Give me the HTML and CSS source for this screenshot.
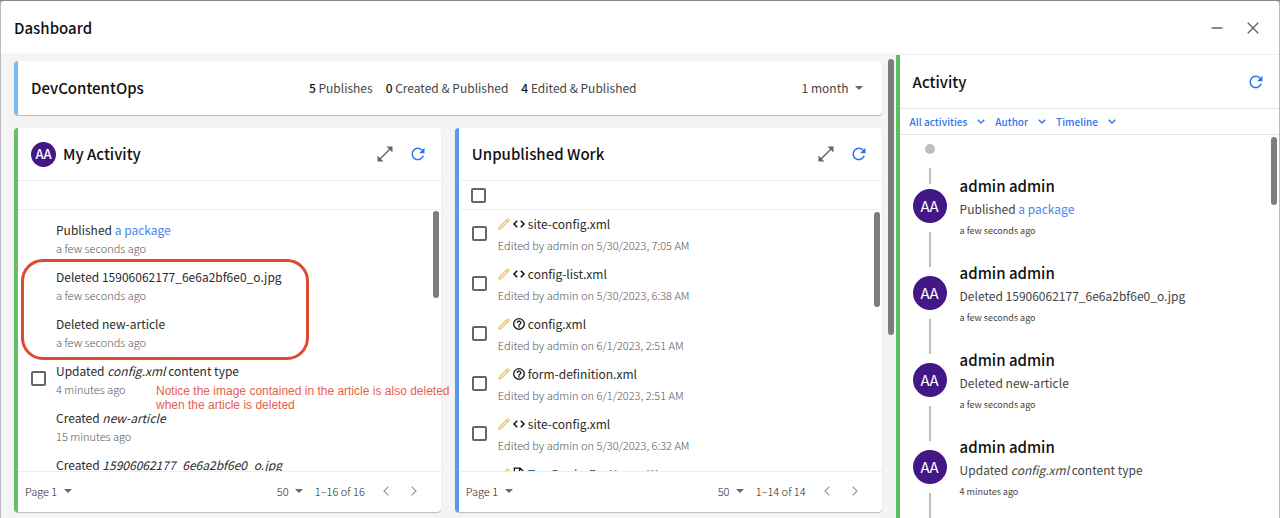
FILE: index.html
```html
<!DOCTYPE html>
<html lang="en">
<head>
<meta charset="utf-8">
<title>Dashboard</title>
<meta name="viewport" content="width=device-width, initial-scale=1">
<link rel="stylesheet" href="styles.css">
</head>
<body>
<svg class="sprite" aria-hidden="true">
  <symbol id="i-expand" viewBox="0 0 16 16"><path d="M3 13 13 3" fill="none" stroke="currentColor" stroke-width="1.400"/><path d="M9.500.5h6v6zM.5 9.500v6h6z" fill="currentColor"/></symbol>
  <symbol id="i-refresh" viewBox="0 0 16 16"><path d="M14 10A6.500 6.500 0 1 1 13 3.900" fill="none" stroke="currentColor" stroke-width="1.700"/><path d="M15.400.8v6.200H9.200z" fill="currentColor"/></symbol>
  <symbol id="i-minus" viewBox="0 0 12 12"><path d="M.5 6h11" stroke="currentColor" stroke-width="1.300"/></symbol>
  <symbol id="i-close" viewBox="0 0 12 12"><path d="m.8.8 10.400 10.400M11.200.8.8 11.200" stroke="currentColor" stroke-width="1.400"/></symbol>
  <symbol id="i-arrow" viewBox="0 0 8 4"><path d="M0 0h8L4 4z" fill="currentColor"/></symbol>
  <symbol id="i-chevron" viewBox="0 0 8 5"><path d="m.7.7 3.300 3.300L7.300.7" fill="none" stroke="currentColor" stroke-width="1.300"/></symbol>
  <symbol id="i-prev" viewBox="0 0 6 10"><path d="M5.400.6 1 5l4.400 4.400" fill="none" stroke="currentColor" stroke-width="1.200"/></symbol>
  <symbol id="i-next" viewBox="0 0 6 10"><path d="M.6.6 5 5 .6 9.400" fill="none" stroke="currentColor" stroke-width="1.200"/></symbol>
  <symbol id="i-pencil" viewBox="0 0 12 12"><path d="M.8 11.200 1.500 8.600 8.900 1.200Q9.700.4 10.500 1.200L10.800 1.500Q11.600 2.300 10.800 3.100L3.400 10.500ZM8 2.100 9.900 4" fill="#fde6b0" stroke="#f5b83a" stroke-width="1"/></symbol>
  <symbol id="i-code" viewBox="0 0 24 24"><path d="M9.400 16.600 4.800 12l4.600-4.600L8 6l-6 6 6 6zm5.200 0 4.600-4.600-4.600-4.600L16 6l6 6-6 6z" fill="currentColor" stroke="currentColor" stroke-width=".8"/></symbol>
  <symbol id="i-help" viewBox="0 0 24 24"><path d="M11 18h2v-2h-2v2zm1-16C6.480 2 2 6.480 2 12s4.480 10 10 10 10-4.480 10-10S17.520 2 12 2zm0 18c-4.410 0-8-3.590-8-8s3.590-8 8-8 8 3.590 8 8-3.590 8-8 8zm0-14c-2.210 0-4 1.790-4 4h2c0-1.100.9-2 2-2s2 .9 2 2c0 2-3 1.750-3 5h2c0-2.250 3-2.500 3-5 0-2.210-1.790-4-4-4z" fill="currentColor" stroke="currentColor" stroke-width=".3"/></symbol>
  <symbol id="i-file" viewBox="0 0 24 24"><path d="M14 2H4v20h16V8zM13 3v6h6" fill="none" stroke="currentColor" stroke-width="2.200"/></symbol>
</svg>

<div class="window">
  <header class="titlebar">
    <h1 class="title">Dashboard</h1>
    <button class="icon-btn" type="button" aria-label="Minimize"><svg class="ico-12"><use href="#i-minus"/></svg></button>
    <button class="icon-btn" type="button" aria-label="Close"><svg class="ico-12"><use href="#i-close"/></svg></button>
  </header>

  <div class="body">
    <main class="board">
      <section class="card card-sky summary">
        <h2 class="title">DevContentOps</h2>
        <div class="stats">
          <span><b>5</b> Publishes</span>
          <span><b>0</b> Created &amp; Published</span>
          <span><b>4</b> Edited &amp; Published</span>
        </div>
        <label class="pick"><select aria-label="Period"><option>1 month</option></select><svg class="caret"><use href="#i-arrow"/></svg></label>
      </section>

      <div class="columns">
        <section class="card card-green panel">
          <header class="panel-head">
            <span class="avatar avatar-sm">AA</span>
            <h2 class="title">My Activity</h2>
            <button class="icon-btn" type="button" aria-label="Expand"><svg class="ico-16"><use href="#i-expand"/></svg></button>
            <button class="icon-btn blue" type="button" aria-label="Refresh"><svg class="ico-14"><use href="#i-refresh"/></svg></button>
          </header>
          <div class="toolbar"></div>
          <ul class="list acts">
            <li class="act"><span></span><div><p class="line">Published <a href="#">a package</a></p><p class="sub">a few seconds ago</p></div></li>
            <li class="act"><span></span><div><p class="line">Deleted 15906062177_6e6a2bf6e0_o.jpg</p><p class="sub">a few seconds ago</p></div></li>
            <li class="act"><span></span><div><p class="line">Deleted new-article</p><p class="sub">a few seconds ago</p></div></li>
            <li class="act"><input class="check" type="checkbox" aria-label="Select config.xml"><div><p class="line">Updated <em>config.xml</em> content type</p><p class="sub">4 minutes ago</p></div></li>
            <li class="act"><span></span><div><p class="line">Created <em>new-article</em></p><p class="sub">15 minutes ago</p></div></li>
            <li class="act"><span></span><div><p class="line">Created <em>15906062177_6e6a2bf6e0_o.jpg</em></p><p class="sub">15 minutes ago</p></div></li>
          </ul>
          <span class="thumb thumb-acts"></span>
          <footer class="pager">
            <label class="pick page-pick"><select aria-label="Page"><option>Page 1</option></select><svg class="caret"><use href="#i-arrow"/></svg></label>
            <label class="pick"><select aria-label="Rows per page"><option>50</option></select><svg class="caret"><use href="#i-arrow"/></svg></label>
            <span class="range">1–16 of 16</span>
            <button class="step" type="button" aria-label="Previous page" disabled><svg><use href="#i-prev"/></svg></button>
            <button class="step" type="button" aria-label="Next page" disabled><svg><use href="#i-next"/></svg></button>
          </footer>
          <div class="mark"></div>
          <p class="note">Notice the image contained in the article is also deleted<br>when the article is deleted</p>
        </section>

        <section class="card card-blue panel">
          <header class="panel-head">
            <h2 class="title">Unpublished Work</h2>
            <button class="icon-btn" type="button" aria-label="Expand"><svg class="ico-16"><use href="#i-expand"/></svg></button>
            <button class="icon-btn blue" type="button" aria-label="Refresh"><svg class="ico-14"><use href="#i-refresh"/></svg></button>
          </header>
          <div class="toolbar"><input class="check" type="checkbox" aria-label="Select all"></div>
          <ul class="list works">
            <li class="work"><input class="check" type="checkbox" id="w1"><label for="w1"><span class="line"><svg class="ico-12"><use href="#i-pencil"/></svg><svg class="ico-14"><use href="#i-code"/></svg>site-config.xml</span><span class="sub">Edited by admin on 5/30/2023, 7:05 AM</span></label></li>
            <li class="work"><input class="check" type="checkbox" id="w2"><label for="w2"><span class="line"><svg class="ico-12"><use href="#i-pencil"/></svg><svg class="ico-14"><use href="#i-code"/></svg>config-list.xml</span><span class="sub">Edited by admin on 5/30/2023, 6:38 AM</span></label></li>
            <li class="work"><input class="check" type="checkbox" id="w3"><label for="w3"><span class="line"><svg class="ico-12"><use href="#i-pencil"/></svg><svg class="ico-14"><use href="#i-help"/></svg>config.xml</span><span class="sub">Edited by admin on 6/1/2023, 2:51 AM</span></label></li>
            <li class="work"><input class="check" type="checkbox" id="w4"><label for="w4"><span class="line"><svg class="ico-12"><use href="#i-pencil"/></svg><svg class="ico-14"><use href="#i-help"/></svg>form-definition.xml</span><span class="sub">Edited by admin on 6/1/2023, 2:51 AM</span></label></li>
            <li class="work"><input class="check" type="checkbox" id="w5"><label for="w5"><span class="line"><svg class="ico-12"><use href="#i-pencil"/></svg><svg class="ico-14"><use href="#i-code"/></svg>site-config.xml</span><span class="sub">Edited by admin on 5/30/2023, 6:32 AM</span></label></li>
            <li class="work"><input class="check" type="checkbox" id="w6"><label for="w6"><span class="line page-name"><svg class="ico-12"><use href="#i-pencil"/></svg><svg class="ico-14"><use href="#i-file"/></svg><span>Top Books For Young Women</span></span><span class="sub">Edited by admin</span></label></li>
          </ul>
          <span class="thumb thumb-works"></span>
          <footer class="pager">
            <label class="pick page-pick"><select aria-label="Page"><option>Page 1</option></select><svg class="caret"><use href="#i-arrow"/></svg></label>
            <label class="pick"><select aria-label="Rows per page"><option>50</option></select><svg class="caret"><use href="#i-arrow"/></svg></label>
            <span class="range">1–14 of 14</span>
            <button class="step" type="button" aria-label="Previous page" disabled><svg><use href="#i-prev"/></svg></button>
            <button class="step" type="button" aria-label="Next page" disabled><svg><use href="#i-next"/></svg></button>
          </footer>
        </section>
      </div>
      <span class="thumb thumb-board"></span>
    </main>

    <aside class="feed">
      <header class="feed-head">
        <h2 class="title">Activity</h2>
        <button class="icon-btn blue" type="button" aria-label="Refresh"><svg class="ico-14"><use href="#i-refresh"/></svg></button>
      </header>
      <div class="filters">
        <button type="button">All activities<svg><use href="#i-chevron"/></svg></button>
        <button type="button">Author<svg><use href="#i-chevron"/></svg></button>
        <button type="button">Timeline<svg><use href="#i-chevron"/></svg></button>
      </div>
      <div class="timeline">
        <div class="start"><span class="dot"></span><span class="rail"></span></div>
        <article class="event"><div class="spine"><span class="avatar">AA</span><span class="rail"></span></div><div><h3 class="title">admin admin</h3><p class="line">Published <a href="#">a package</a></p><p class="when">a few seconds ago</p></div></article>
        <article class="event"><div class="spine"><span class="avatar">AA</span><span class="rail"></span></div><div><h3 class="title">admin admin</h3><p class="line">Deleted 15906062177_6e6a2bf6e0_o.jpg</p><p class="when">a few seconds ago</p></div></article>
        <article class="event"><div class="spine"><span class="avatar">AA</span><span class="rail"></span></div><div><h3 class="title">admin admin</h3><p class="line">Deleted new-article</p><p class="when">a few seconds ago</p></div></article>
        <article class="event"><div class="spine"><span class="avatar">AA</span><span class="rail"></span></div><div><h3 class="title">admin admin</h3><p class="line">Updated <em>config.xml</em> content type</p><p class="when">4 minutes ago</p></div></article>
      </div>
      <span class="thumb thumb-feed"></span>
    </aside>
  </div>
</div>
</body>
</html>
```

FILE: styles.css
```css
* { box-sizing: border-box; }

body {
  margin: 0;
  background: #8a8a8a;
  color: #444;
  font: 400 12px/20px "Noto Sans CJK SC", "Noto Sans", sans-serif;
}

h1, h2, h3, p, ul { margin: 0; padding: 0; }
ul { list-style: none; }
svg { display: block; flex: none; }
a { color: #4a86ea; text-decoration: none; }

button, select {
  padding: 0;
  border: 0;
  background: none;
  color: inherit;
  font: inherit;
}

.sprite { position: absolute; width: 0; height: 0; }
.ico-12 { width: 12px; height: 12px; }
.ico-14 { width: 14px; height: 14px; color: #111; }
.blue .ico-14 { color: inherit; }
.ico-16 { width: 16px; height: 16px; }

.window {
  display: flex;
  flex-direction: column;
  height: 100vh;
  overflow: hidden;
  border: 1px solid #bbb;
  border-top-color: #888;
  border-bottom: 0;
  border-radius: 4px 4px 0 0;
  background: #fff;
}

.title { color: #111; font-size: 15px; font-weight: 500; line-height: 24px; }

.titlebar {
  display: flex;
  align-items: center;
  gap: 12px;
  height: 54px;
  flex: none;
  padding: 0 14px 0 13px;
  border-bottom: 1px solid #eee;
}
.titlebar .title, .panel-head .title, .feed-head .title { flex: 1; }

.icon-btn { display: grid; place-items: center; width: 24px; height: 24px; color: #666; }
.icon-btn.blue { color: #2f74ea; }

.body { display: flex; flex: 1; min-height: 0; }

.board {
  position: relative;
  display: flex;
  flex-direction: column;
  gap: 13px;
  flex: 1;
  min-width: 0;
  padding: 6px 14px 6px 13px;
  background: #f4f4f4;
}

.card {
  position: relative;
  border-left: 4px solid;
  border-radius: 4px;
  background: #fff;
  box-shadow: 0 1px 1px #bbb;
}
.card-sky { border-color: #77bdf0; }
.card-green { border-color: #67bf63; }
.card-blue { border-color: #5899ea; }

.summary {
  display: flex;
  align-items: center;
  justify-content: space-between;
  height: 54px;
  flex: none;
  padding: 0 19px 0 13px;
}
.stats { display: flex; gap: 13px; }
.stats b { color: #111; font-weight: 500; }

.columns { display: flex; gap: 14px; flex: 1; min-height: 0; }
.panel { display: flex; flex-direction: column; flex: 1; min-width: 0; }
.card-green { z-index: 1; }

.panel-head {
  display: flex;
  align-items: center;
  gap: 9px;
  height: 53px;
  flex: none;
  padding: 0 11px 0 13px;
  border-bottom: 1px solid #eee;
}
.panel-head .avatar + .title { margin-left: -2px; }

.avatar {
  display: grid;
  place-items: center;
  width: 34px;
  height: 34px;
  border-radius: 50%;
  background: #431785;
  color: #fff;
  font-size: 15px;
}
.avatar-sm { width: 25px; height: 25px; font-size: 13px; font-weight: 500; }

.toolbar {
  display: flex;
  align-items: center;
  height: 29px;
  flex: none;
  padding-left: 12px;
  border-bottom: 1px solid #eee;
}

.check {
  appearance: none;
  width: 15px;
  height: 15px;
  margin: 0;
  border: 2px solid #666;
  border-radius: 2px;
  background: #fff;
}

.list { flex: 1; min-height: 0; overflow: hidden; }
.list .line { color: #2b2b2b; }
.sub { color: #555; font-size: 11px; font-weight: 300; line-height: 16px; }

.acts { padding-top: 8px; }
.act { display: grid; grid-template-columns: 25px 1fr; align-items: center; height: 47px; padding: 0 0 8px 13px; }

.works { padding-top: 2px; }
.work { display: grid; grid-template-columns: 26px 1fr; align-items: center; height: 50px; padding: 0 0 7px 13px; }
.work .line { display: flex; align-items: center; gap: 2px; }
.work .sub { display: block; padding-top: 3px; }
.page-name span { color: #33658f; }

.thumb { position: absolute; width: 6px; border-radius: 3px; background: #7c7c7c; }
.thumb-acts { top: 83px; right: 2px; height: 87px; }
.thumb-works { top: 84px; right: 2px; height: 95px; }
.thumb-board { top: 4px; right: 2px; height: 276px; }
.thumb-feed { top: 82px; right: 2px; height: 68px; }

.pager {
  display: flex;
  align-items: center;
  height: 41px;
  flex: none;
  padding: 0 18px 2px 7px;
  border-top: 1px solid #eee;
  color: #222;
  font-size: 11px;
  font-weight: 300;
}
.page-pick { margin-right: auto; }
.range { margin: 0 12px; }
.step { display: grid; place-items: center; width: 18px; height: 24px; margin-left: 10px; color: #999; }
.step:first-of-type { margin-left: 0; }
.step svg { width: 6px; height: 10px; }

.pick { display: flex; align-items: center; gap: 6px; }
.pick select { appearance: none; }
.caret { width: 8px; height: 4px; color: #666; }

.mark {
  position: absolute;
  top: 131px;
  left: 3px;
  width: 288px;
  height: 101px;
  border: 3px solid #dc4a31;
  border-radius: 22px;
}
.note {
  position: absolute;
  top: 256px;
  left: 138px;
  color: #e5604e;
  font: 12px/14px "Liberation Sans", Arial, sans-serif;
  white-space: nowrap;
}

.feed {
  position: relative;
  width: 30%;
  overflow: hidden;
  border-left: 4px solid #5cbf60;
}
.feed-head {
  display: flex;
  align-items: center;
  height: 54px;
  padding: 0 11px 0 13px;
  border-bottom: 1px solid #e6e6e6;
}
.filters {
  display: flex;
  gap: 10px;
  height: 26px;
  padding-left: 10px;
  border-bottom: 1px solid #e6e6e6;
  color: #2f74ea;
  font-size: 10px;
  font-weight: 500;
}
.filters button { display: flex; align-items: center; gap: 10px; }
.filters svg { width: 8px; height: 5px; }

.timeline { padding: 9px 0 0 13px; }
.start { display: flex; flex-direction: column; align-items: center; gap: 14px; width: 34px; height: 45px; padding-bottom: 5px; }
.dot { width: 10px; height: 10px; flex: none; border-radius: 50%; background: #bdbdbd; }
.rail { width: 2px; flex: 1; background: #bdbdbd; }
.event { display: grid; grid-template-columns: 34px 1fr; gap: 13px; height: 87px; }
.spine { display: flex; flex-direction: column; align-items: center; gap: 9px; padding: 0 0 9px; }
.event .title { margin-top: -15px; }
.event .line { margin-top: 1px; }
.when { margin-top: 3px; font-size: 9px; line-height: 18px; }
```
